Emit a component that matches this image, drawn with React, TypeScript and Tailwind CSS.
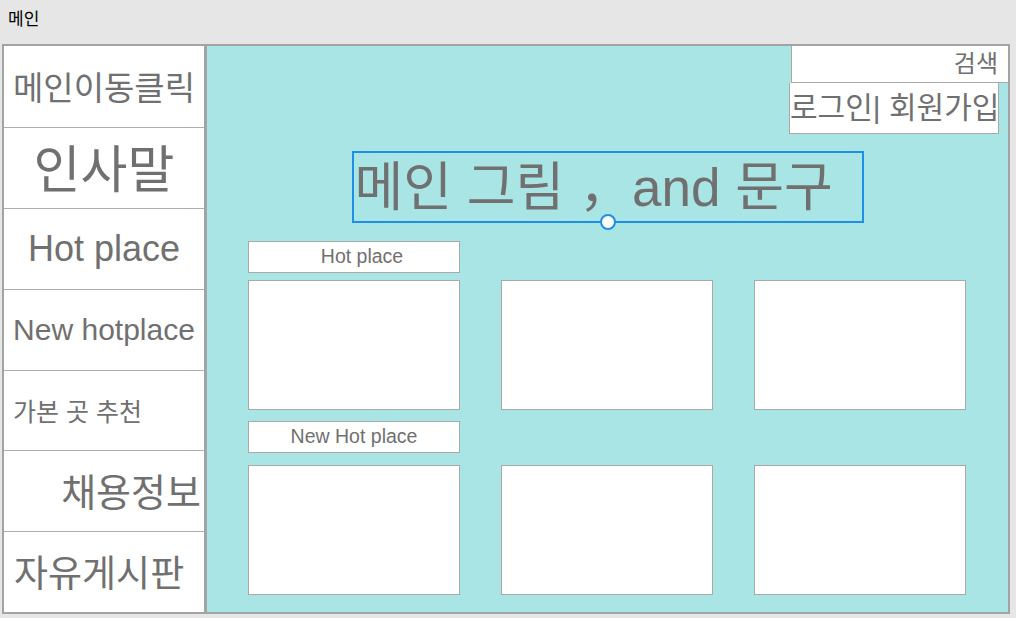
import React from "react";

const font = { fontFamily: '"Liberation Sans", "Noto Sans CJK KR", sans-serif' };

const Card: React.FC = () => (
  <div className="h-[130px] w-[212px] border border-[#a9a9a9] bg-white" />
);

const SideItem: React.FC<{ label: string; className: string; first?: boolean }> = ({
  label,
  className,
  first,
}) => (
  <div
    className={`flex items-center text-[#707070] ${
      first ? "" : "border-t border-[#adadad]"
    } ${className}`}
  >
    <span className="whitespace-nowrap leading-none">{label}</span>
  </div>
);

export default function App() {
  return (
    <div className="h-[618px] w-[1016px] overflow-hidden bg-[#e6e6e6]" style={font}>
      {/* title bar */}
      <div className="flex h-[44px] items-center pl-2 pb-1 text-[17px] text-black">메인</div>

      {/* frame */}
      <div className="ml-[2px] flex h-[570px] w-[1008px] border-2 border-[#a3a3a3] bg-white">
        {/* sidebar */}
        <div className="flex w-[203px] shrink-0 flex-col border-r-[3px] border-[#a3a3a3]">
          <SideItem first label="메인이동클릭" className="h-[81px] shrink-0 justify-center pt-1 text-[33px]" />
          <SideItem label="인사말" className="h-[81px] shrink-0 justify-center pt-1 text-[51px]" />
          <SideItem label="Hot place" className="h-[81px] shrink-0 justify-center text-[36px]" />
          <SideItem label="New hotplace" className="h-[81px] shrink-0 justify-center text-[30px]" />
          <SideItem label="가본 곳 추천" className="h-[80px] shrink-0 pl-[9px] pt-1 text-[25px]" />
          <SideItem label="채용정보" className="h-[81px] shrink-0 justify-end pr-[3px] pt-1 text-[38px]" />
          <SideItem label="자유게시판" className="flex-1 pl-[10px] pt-1 text-[37px]" />
        </div>

        {/* content */}
        <div className="flex flex-1 flex-col bg-[#aae5e5]">
          <div className="flex flex-col items-end">
            <div className="flex h-[37px] w-[217px] items-center justify-end border-b border-l border-[#a9a9a9] bg-white pr-[10px] text-[24px] text-[#707070]">
              <span className="leading-none">검색</span>
            </div>
            <div className="mr-[9px] flex h-[51px] w-[210px] items-center overflow-hidden border border-t-0 border-[#a9a9a9] bg-white text-[30px] text-[#707070]">
              <span className="whitespace-nowrap leading-none">로그인| 회원가입</span>
            </div>
          </div>

          <div className="mt-[17px] flex justify-center">
            <div className="relative flex h-[72px] w-[512px] items-center border-2 border-[#1e8fe6] pl-[1px] text-[53px] text-[#707070]">
              <span className="whitespace-nowrap leading-none">메인 그림 ，and 문구</span>
              <div className="absolute -bottom-[9px] left-1/2 h-4 w-4 -translate-x-1/2 rounded-full border-2 border-[#1e8fe6] bg-white" />
            </div>
          </div>

          <div className="mt-[18px] flex flex-col pl-[41px]">
            <div className="flex h-[32px] w-[212px] items-center justify-center border border-[#a9a9a9] bg-white pl-4 text-[19.5px] text-[#707070]">
              Hot place
            </div>
            <div className="mt-[7px] flex gap-[41px]">
              <Card />
              <Card />
              <Card />
            </div>
            <div className="mt-[11px] flex h-[32px] w-[212px] items-center justify-center border border-[#a9a9a9] bg-white text-[19.5px] text-[#707070]">
              New Hot place
            </div>
            <div className="mt-[12px] flex gap-[41px]">
              <Card />
              <Card />
              <Card />
            </div>
          </div>
        </div>
      </div>
    </div>
  );
}
